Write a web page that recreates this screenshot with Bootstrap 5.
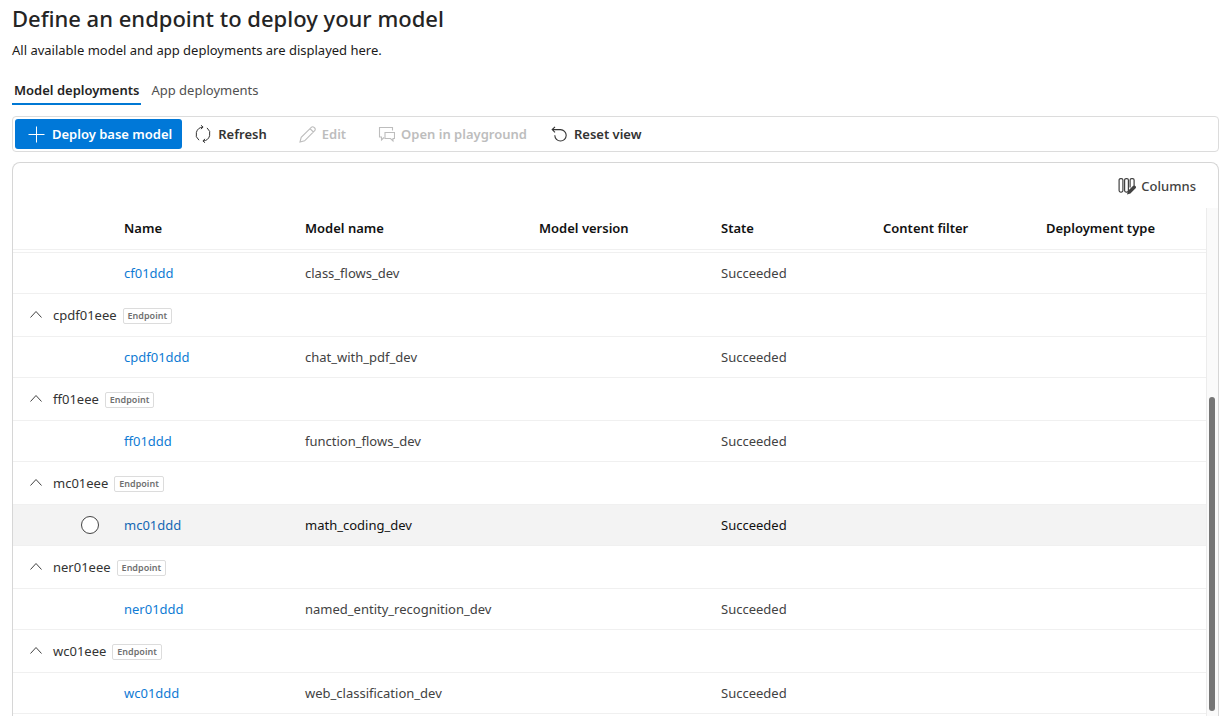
<!DOCTYPE html>
<html lang="en">
<head>
<meta charset="utf-8">
<meta name="viewport" content="width=device-width, initial-scale=1">
<title>Model deployments</title>
<link href="https://cdn.jsdelivr.net/npm/bootstrap@5.3.0/dist/css/bootstrap.min.css" rel="stylesheet">
<style>
  body { font-family: "Noto Sans", "Open Sans", sans-serif; font-size: 13px; line-height: 20px; color: #1b1a19; background: #fff; }
  svg { display: block; flex: none; fill: none; stroke: currentColor; }
  .page-shell { padding: 3px 5px 0 12px; overflow: hidden; }
  .page-title { font-size: 22px; line-height: 30px; font-weight: 500; color: #242424; }
  .page-intro { margin: 7px 0 0; }
  .tab-strip { gap: 8px; margin-top: 20px; }
  .tab-strip .nav-link { padding: 0 2px 3px; border-bottom: 2px solid transparent; color: #505050; }
  .tab-strip .nav-link.active { color: #242424; font-weight: 600; border-color: #0078d4; }
  .tool-strip { margin-top: 11px; border: 1px solid #dcdcdc; border-radius: 4px; padding: 2px; }
  .tool-strip .btn { --bs-btn-font-size: 13px; --bs-btn-font-weight: 600; --bs-btn-line-height: 20px; --bs-btn-border-width: 0; --bs-btn-border-radius: 3px; --bs-btn-color: #333; --bs-btn-disabled-color: #bdbdbd; --bs-btn-disabled-opacity: 1; padding: 5px 12px; gap: 6px; height: 30px; }
  .tool-strip .btn-primary { --bs-btn-bg: #0078d8; --bs-btn-color: #fff; padding: 5px 10px 5px 13px; gap: 7px; }
  .grid-card { margin-top: 10px; border: 1px solid #d6d6d6; border-bottom: 0; border-radius: 8px 8px 0 0; }
  .card-tools { height: 45px; padding: 0 22px 0 0; }
  .card-tools .btn { --bs-btn-font-size: 13px; --bs-btn-font-weight: 500; --bs-btn-line-height: 20px; --bs-btn-color: #424242; gap: 5px; padding: 0; border: 0; }
  .deploy-table { --bs-table-bg: transparent; table-layout: fixed; margin: 0; border-color: #f0f0f0; color: #424242; }
  .deploy-table > :not(caption) > * > * { padding: 0 8px; vertical-align: middle; white-space: nowrap; color: inherit; }
  .deploy-table th { font-weight: 600; }
  .deploy-table thead tr { height: 41px; color: #111; }
  .header-gap { height: 3px; }
  .item-row { height: 41px; }
  .group-row { height: 43px; color: #333; }
  .deploy-table > tbody > .group-row > td { padding-left: 15px; }
  .item-row a { color: #0f7bd4; text-decoration: none; }
  .item-row.hovered { background: #f3f3f3; color: #111; }
  .item-row.hovered a { color: #1267b4; }
  .toggle-btn { border: 0; background: none; padding: 0; color: #424242; margin-right: 9px; }
  .kind-tag { border: 1px solid #dcdcdc; border-radius: 2px; font-size: 9px; line-height: 14px; font-weight: 600; color: #707070; padding: 0 4px; margin: 3px 0 0 6px; }
  .form-check-input.row-pick { width: 18px; height: 18px; margin: 0 9px 0 auto; border-color: #444; float: none; display: block; }
  .scroll-rail { width: 12px; flex: none; background: #fafafa; border-left: 1px solid #ececec; }
  .rail-before { flex: 189; }
  .rail-thumb { flex: 314; width: 6px; margin-left: 2px; border-radius: 3px; background: #767676; }
  .rail-after { flex: 5; }
</style>
</head>
<body>
<main class="page-shell vh-100 d-flex flex-column">
  <h1 class="page-title mb-0">Define an endpoint to deploy your model</h1>
  <p class="page-intro">All available model and app deployments are displayed here.</p>

  <nav class="nav tab-strip">
    <a class="nav-link active" href="#models" aria-current="page">Model deployments</a>
    <a class="nav-link" href="#apps">App deployments</a>
  </nav>

  <div class="tool-strip d-flex align-items-center" role="toolbar" aria-label="Deployment actions">
    <button type="button" class="btn btn-primary d-flex align-items-center">
      <svg width="17" height="17" viewBox="0 0 17 17"><path d="M8.500.5v16M.5 8.500h16"/></svg>Deploy base model</button>
    <button type="button" class="btn d-flex align-items-center">
      <svg width="18" height="18" viewBox="0 0 18 18"><path d="M5 15.200A7.300 7.300 0 0 1 8.800 2.100M6.900.2l2.200 1.900-2.200 2M13 2.900a7.300 7.300 0 0 1-3.800 13.100M11.100 17.800l-2.200-1.900 2.200-2"/></svg>Refresh</button>
    <button type="button" class="btn d-flex align-items-center ms-2 border-0" disabled>
      <svg width="17" height="17" viewBox="0 0 17 17" stroke-width="1.100"><path d="M1 16l1.200-4.600L12.300 1.300a1.900 1.900 0 0 1 2.700 0l.7.7a1.900 1.900 0 0 1 0 2.700L5.600 14.800 1 16zM11 2.600 14.400 6"/></svg>Edit</button>
    <button type="button" class="btn d-flex align-items-center ms-2 border-0" disabled>
      <svg width="17" height="17" viewBox="0 0 17 17" stroke-width="1.100"><path d="M14.500 4.500V1.500h-13v9.500h2v3l2.500-2.500M7 6.500h9.500v6h-1.500v2.500l-2.500-2.500H7z"/></svg>Open in playground</button>
    <button type="button" class="btn d-flex align-items-center">
      <svg width="17" height="17" viewBox="0 0 17 17" stroke-width="1.100"><path d="M4 .8 1.200 3.600 4 6.400M1.500 3.600H9.500a5.700 5.700 0 1 1-5.700 5.700"/></svg>Reset view</button>
  </div>

  <section class="grid-card flex-grow-1 d-flex flex-column">
    <div class="card-tools d-flex align-items-center justify-content-end">
      <button type="button" class="btn d-flex align-items-center">
        <svg width="18" height="18" viewBox="0 0 18 18" stroke-width="1.200"><rect x="1.100" y="1.600" width="3.800" height="13.500" rx="1.500"/><rect x="6.600" y="1.600" width="3.800" height="13.500" rx="1.500"/><path d="M12.100 10.500V3.100a1.500 1.500 0 0 1 1.500-1.500h1a1.500 1.500 0 0 1 1.500 1.500v6"/><path d="M9 17.500l.9-3.400 5-5a1.700 1.700 0 0 1 2.500 2.500l-5 5z" fill="currentColor" stroke="none"/></svg>Columns</button>
    </div>
    <div class="d-flex flex-grow-1">
      <div class="flex-grow-1 overflow-hidden">
        <table class="table deploy-table">
          <colgroup><col style="width:103px"><col style="width:181px"><col style="width:234px"><col style="width:182px"><col style="width:162px"><col style="width:163px"><col style="width:168px"></colgroup>
          <thead>
            <tr><th></th><th scope="col">Name</th><th scope="col">Model name</th><th scope="col">Model version</th><th scope="col">State</th><th scope="col">Content filter</th><th scope="col">Deployment type</th></tr>
          </thead>
          <tbody>
            <tr class="header-gap"><td colspan="7"></td></tr>
            <tr class="item-row"><td></td><td><a href="#cf01ddd">cf01ddd</a></td><td>class_flows_dev</td><td></td><td>Succeeded</td><td></td><td></td></tr>
            <tr class="group-row"><td colspan="7"><div class="d-flex align-items-center"><button type="button" class="toggle-btn" aria-label="Collapse cpdf01eee"><svg width="16" height="16" viewBox="0 0 16 16"><path d="M2.500 10.500 8 4.500l5.500 6"/></svg></button>cpdf01eee<span class="kind-tag">Endpoint</span></div></td></tr>
            <tr class="item-row"><td></td><td><a href="#cpdf01ddd">cpdf01ddd</a></td><td>chat_with_pdf_dev</td><td></td><td>Succeeded</td><td></td><td></td></tr>
            <tr class="group-row"><td colspan="7"><div class="d-flex align-items-center"><button type="button" class="toggle-btn" aria-label="Collapse ff01eee"><svg width="16" height="16" viewBox="0 0 16 16"><path d="M2.500 10.500 8 4.500l5.500 6"/></svg></button>ff01eee<span class="kind-tag">Endpoint</span></div></td></tr>
            <tr class="item-row"><td></td><td><a href="#ff01ddd">ff01ddd</a></td><td>function_flows_dev</td><td></td><td>Succeeded</td><td></td><td></td></tr>
            <tr class="group-row"><td colspan="7"><div class="d-flex align-items-center"><button type="button" class="toggle-btn" aria-label="Collapse mc01eee"><svg width="16" height="16" viewBox="0 0 16 16"><path d="M2.500 10.500 8 4.500l5.500 6"/></svg></button>mc01eee<span class="kind-tag">Endpoint</span></div></td></tr>
            <tr class="item-row hovered"><td><input class="form-check-input row-pick" type="radio" name="deployment" aria-label="Select mc01ddd"></td><td><a href="#mc01ddd">mc01ddd</a></td><td>math_coding_dev</td><td></td><td>Succeeded</td><td></td><td></td></tr>
            <tr class="group-row"><td colspan="7"><div class="d-flex align-items-center"><button type="button" class="toggle-btn" aria-label="Collapse ner01eee"><svg width="16" height="16" viewBox="0 0 16 16"><path d="M2.500 10.500 8 4.500l5.500 6"/></svg></button>ner01eee<span class="kind-tag">Endpoint</span></div></td></tr>
            <tr class="item-row"><td></td><td><a href="#ner01ddd">ner01ddd</a></td><td>named_entity_recognition_dev</td><td></td><td>Succeeded</td><td></td><td></td></tr>
            <tr class="group-row"><td colspan="7"><div class="d-flex align-items-center"><button type="button" class="toggle-btn" aria-label="Collapse wc01eee"><svg width="16" height="16" viewBox="0 0 16 16"><path d="M2.500 10.500 8 4.500l5.500 6"/></svg></button>wc01eee<span class="kind-tag">Endpoint</span></div></td></tr>
            <tr class="item-row"><td></td><td><a href="#wc01ddd">wc01ddd</a></td><td>web_classification_dev</td><td></td><td>Succeeded</td><td></td><td></td></tr>
          </tbody>
        </table>
      </div>
      <div class="scroll-rail d-flex flex-column" aria-hidden="true">
        <div class="rail-before"></div><div class="rail-thumb"></div><div class="rail-after"></div>
      </div>
    </div>
  </section>
</main>
<script src="https://cdn.jsdelivr.net/npm/bootstrap@5.3.0/dist/js/bootstrap.bundle.min.js"></script>
</body>
</html>
